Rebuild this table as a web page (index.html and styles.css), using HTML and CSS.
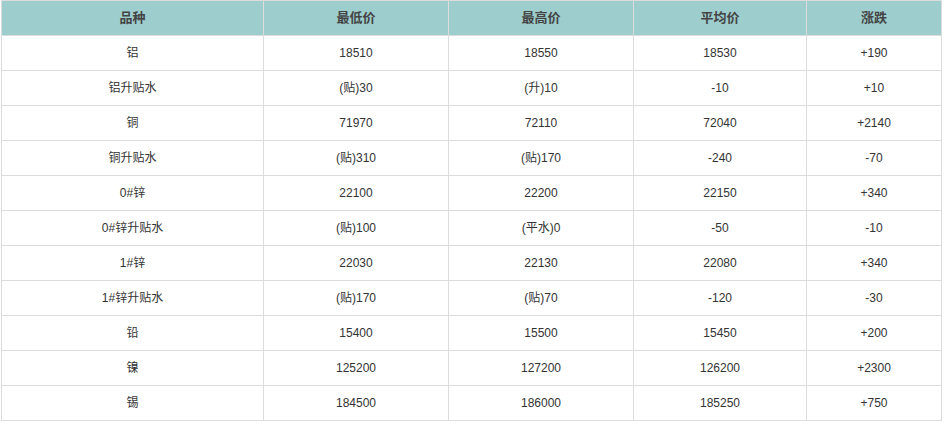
FILE: index.html
```html
<!DOCTYPE html>
<html lang="zh-CN">
<head>
<meta charset="utf-8">
<title>价格表</title>
<link rel="stylesheet" href="styles.css">
</head>
<body>
<table class="price-table">
  <colgroup>
    <col class="c1"><col class="c2"><col class="c3"><col class="c4"><col class="c5">
  </colgroup>
  <thead>
    <tr><th>品种</th><th>最低价</th><th>最高价</th><th>平均价</th><th>涨跌</th></tr>
  </thead>
  <tbody>
    <tr><td>铝</td><td>18510</td><td>18550</td><td>18530</td><td>+190</td></tr>
    <tr><td>铝升贴水</td><td>(贴)30</td><td>(升)10</td><td>-10</td><td>+10</td></tr>
    <tr><td>铜</td><td>71970</td><td>72110</td><td>72040</td><td>+2140</td></tr>
    <tr><td>铜升贴水</td><td>(贴)310</td><td>(贴)170</td><td>-240</td><td>-70</td></tr>
    <tr><td>0#锌</td><td>22100</td><td>22200</td><td>22150</td><td>+340</td></tr>
    <tr><td>0#锌升贴水</td><td>(贴)100</td><td>(平水)0</td><td>-50</td><td>-10</td></tr>
    <tr><td>1#锌</td><td>22030</td><td>22130</td><td>22080</td><td>+340</td></tr>
    <tr><td>1#锌升贴水</td><td>(贴)170</td><td>(贴)70</td><td>-120</td><td>-30</td></tr>
    <tr><td>铅</td><td>15400</td><td>15500</td><td>15450</td><td>+200</td></tr>
    <tr><td>镍</td><td>125200</td><td>127200</td><td>126200</td><td>+2300</td></tr>
    <tr><td>锡</td><td>184500</td><td>186000</td><td>185250</td><td>+750</td></tr>
  </tbody>
</table>
</body>
</html>
```

FILE: styles.css
```css
html, body {
  margin: 0;
  padding: 0;
  background: #fff;
}
body {
  padding-left: 1px;
  font-family: "Liberation Sans", "Noto Sans CJK SC", sans-serif;
  font-size: 12px;
  color: #333;
}
.price-table {
  border-collapse: collapse;
  width: 940px;
  table-layout: fixed;
}
.c1 { width: 262px; }
.c2 { width: 185px; }
.c3 { width: 185px; }
.c4 { width: 173px; }
.c5 { width: 135px; }
.price-table th,
.price-table td {
  border: 1px solid #dcdcdc;
  height: 34px;
  padding: 0;
  text-align: center;
  vertical-align: middle;
  line-height: 16px;
}
.price-table th {
  background: #9dcdcd;
  color: #444;
  font-size: 13px;
  font-weight: bold;
}
.price-table td {
  color: #333;
}
```
